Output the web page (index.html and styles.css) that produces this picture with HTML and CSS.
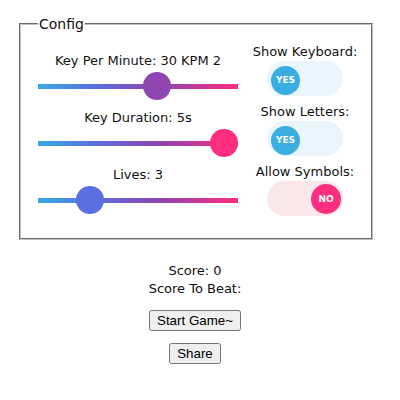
FILE: index.html
```html
<!DOCTYPE html>
<html>
<head>
<meta charset="utf-8">
<link rel="stylesheet" href="styles.css">
</head>
<body>
<div class="page">
  <fieldset class="config">
    <legend>Config</legend>
    <div class="cols">
      <div class="sliders">
        <div class="group">
          <div class="label">Key Per Minute: 30 KPM 2</div>
          <input class="range r1" type="range" min="0" max="100" value="61">
        </div>
        <div class="group">
          <div class="label">Key Duration: 5s</div>
          <input class="range r2" type="range" min="0" max="100" value="100">
        </div>
        <div class="group">
          <div class="label">Lives: 3</div>
          <input class="range r3" type="range" min="0" max="100" value="22">
        </div>
      </div>
      <div class="toggles">
        <div class="tgroup">
          <div class="label">Show Keyboard:</div>
          <div class="toggle on"><span class="knob">YES</span></div>
        </div>
        <div class="tgroup">
          <div class="label">Show Letters:</div>
          <div class="toggle on"><span class="knob">YES</span></div>
        </div>
        <div class="tgroup">
          <div class="label">Allow Symbols:</div>
          <div class="toggle off"><span class="knob">NO</span></div>
        </div>
      </div>
    </div>
  </fieldset>
  <div class="score">
    <div>Score: 0</div>
    <div>Score To Beat:</div>
  </div>
  <div class="btnrow"><button class="btn">Start Game~</button></div>
  <div class="btnrow"><button class="btn">Share</button></div>
</div>
</body>
</html>
```

FILE: styles.css
```css
html, body {
  margin: 0;
  padding: 0;
  background: #fff;
}
body {
  padding: 8px;
  font-family: "DejaVu Sans", sans-serif;
  font-size: 13px;
  color: #111;
}
.page {
  width: 374px;
  text-align: center;
}
.config {
  box-sizing: border-box;
  width: 354px;
  margin: 8px 0 0 11px;
  padding: 10px 6px 22px 17px;
  border: 2px groove #c0c0c0;
  text-align: center;
}
.config legend {
  padding: 0 1px;
  font-size: 14px;
  text-align: left;
}
.cols {
  display: flex;
  gap: 7px;
}
.sliders {
  width: 200px;
  padding-top: 10px;
  display: flex;
  flex-direction: column;
  gap: 9px;
}
.group {
  display: flex;
  flex-direction: column;
  align-items: center;
  gap: 2px;
}
.label {
  line-height: 18px;
  white-space: nowrap;
}
.range {
  -webkit-appearance: none;
  appearance: none;
  margin: 0;
  padding: 0;
  width: 200px;
  height: 28px;
  background: transparent;
  outline: none;
  border: 0;
}
.range::-webkit-slider-runnable-track {
  height: 5px;
  background: linear-gradient(to right, #38aae4 0%, #5a6fe0 28%, #8e44ad 62%, #ff2e7e 100%);
  border: 0;
}
.range::-webkit-slider-thumb {
  -webkit-appearance: none;
  appearance: none;
  width: 28px;
  height: 28px;
  margin-top: -11.5px;
  border-radius: 50%;
  border: 0;
}
.r1::-webkit-slider-thumb { background: #9046b0; }
.r2::-webkit-slider-thumb { background: #ff2e7e; }
.r3::-webkit-slider-thumb { background: #5a6fe0; }
.toggles {
  width: 120px;
  padding-top: 1px;
  display: flex;
  flex-direction: column;
  gap: 7px;
}
.tgroup {
  display: flex;
  flex-direction: column;
  align-items: center;
}
.toggle {
  box-sizing: border-box;
  width: 76px;
  height: 35px;
  border-radius: 18px;
  display: flex;
  align-items: center;
  padding: 0 4px;
}
.toggle.on { background: #eaf5fd; justify-content: flex-start; }
.toggle.off { background: #fbe8ea; justify-content: flex-end; padding-right: 2px; }
.knob {
  width: 29px;
  height: 29px;
  border-radius: 50%;
  color: #fff;
  font-family: "DejaVu Sans", sans-serif;
  font-weight: bold;
  font-size: 9px;
  display: flex;
  align-items: center;
  justify-content: center;
  margin-top: 3px;
}
.on .knob { background: #3aade2; }
.off .knob { background: #ff2e7e; margin-top: 0; width: 30px; height: 30px; }
.score {
  margin-top: 22px;
  line-height: 18px;
}
.btnrow {
  margin-top: 12px;
}
.btn {
  font-family: "Liberation Sans", Arial, sans-serif;
  font-size: 13.33px;
}
```
